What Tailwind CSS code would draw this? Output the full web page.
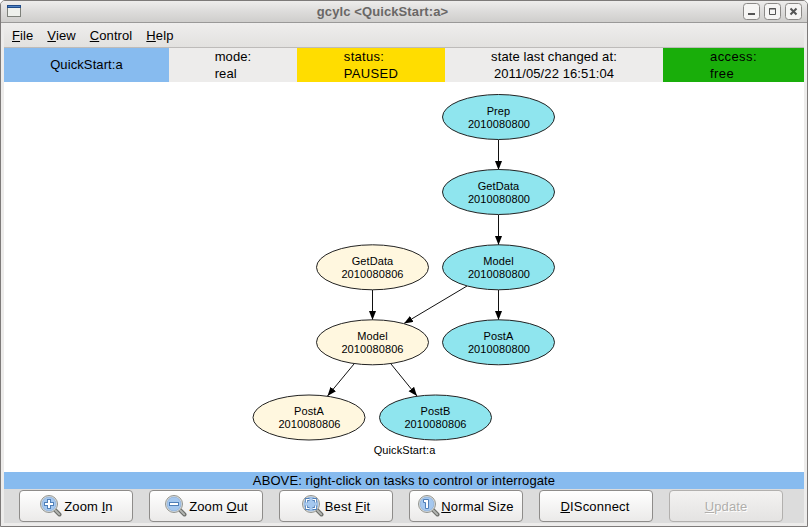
<!DOCTYPE html>
<html lang="en">
<head>
<meta charset="utf-8">
<title>gcylc &lt;QuickStart:a&gt;</title>
<script src="https://cdn.jsdelivr.net/npm/@tailwindcss/browser@4"></script>
</head>
<body class="bg-white">
<svg class="hidden">
  <defs>
    <symbol id="glass" viewBox="0 0 24 24">
      <path d="M16 16L20.500 20.500" stroke="#6d6f6b" stroke-width="4" stroke-linecap="round"/>
      <path d="M15.500 15.500L20.300 20.300" stroke="#b4b6b2" stroke-width="1.800" stroke-linecap="round"/>
      <circle cx="10" cy="10" r="8.500" fill="#e4e6e3" stroke="#92948f" stroke-width="1"/>
      <circle cx="10" cy="10" r="7" fill="#a5c8ef" stroke="#86a9d4" stroke-width=".7"/>
    </symbol>
  </defs>
</svg>
<div class="flex h-[527px] w-[808px] flex-col overflow-hidden rounded-t-[5px] border border-[#7d7a79] bg-[#edeceb] font-['Liberation_Sans',Arial,sans-serif] text-[13px] leading-[17px] tracking-[0.1px] text-black">
  <header class="flex h-[22px] shrink-0 items-center border-b border-[#9a9998] bg-linear-to-b from-[#eeedec] via-[#dddcdb] to-[#cfcecc] pl-[6px] pr-[5px]">
    <svg class="mb-px h-3 w-[14px] shrink-0" viewBox="0 0 14 12"><rect x=".5" y=".5" width="13" height="11" fill="#eef0ec" stroke="#7d807a"/><path d="M0 0h14v3H0z" fill="#204a87"/><path d="M1 1h12v1H1z" fill="#4f82c4"/></svg>
    <h1 class="flex-1 pl-px text-center text-[13px] font-bold text-[#696766]">gcylc &lt;QuickStart:a&gt;</h1>
    <div class="flex gap-1">
      <svg class="size-[17px]" viewBox="0 0 17 17"><rect x=".5" y=".5" width="16" height="16" rx="3" fill="#f6f5f4" stroke="#8b8987"/><path d="M5 10h7v2H5z" fill="#555"/></svg>
      <svg class="size-[17px]" viewBox="0 0 17 17"><rect x=".5" y=".5" width="16" height="16" rx="3" fill="#f6f5f4" stroke="#8b8987"/><path d="M5.500 5.500h6v6h-6zM5 6h7" fill="none" stroke="#555"/></svg>
      <svg class="size-[17px]" viewBox="0 0 17 17"><rect x=".5" y=".5" width="16" height="16" rx="3" fill="#f6f5f4" stroke="#8b8987"/><path d="M5.500 5.500l6 6m0-6l-6 6" stroke="#555" stroke-width="2"/></svg>
    </div>
  </header>
  <nav class="mx-[3px] flex h-[25px] shrink-0 items-center gap-[14px] border-b border-[#bdbbb9] bg-linear-to-b from-[#efeeed] to-[#e2e1df] pl-2">
    <span><u>F</u>ile</span><span><u>V</u>iew</span><span><u>C</u>ontrol</span><span><u>H</u>elp</span>
  </nav>
  <main class="mx-[3px] flex min-h-0 flex-1 flex-col">
    <section class="flex h-[34px] shrink-0 items-center">
      <div class="flex h-full w-[165px] items-center justify-center bg-[#87bbef] pb-[2px]">QuickStart:a</div>
      <div class="flex h-full w-[128px] justify-center"><p>mode:<br>real</p></div>
      <div class="flex h-full w-[148px] justify-center bg-[#ffdd00]"><p class="tracking-[0.3px]">status:<br>PAUSED</p></div>
      <div class="h-full w-[218px] text-center">state last changed at:<br>2011/05/22 16:51:04</div>
      <div class="flex h-full flex-1 justify-center bg-[#19ae0a]"><p class="tracking-[0.4px]">access:<br>free</p></div>
    </section>
    <svg class="h-[390px] w-[800px] shrink-0 bg-white" viewBox="4 82 800 390" font-family="Liberation Sans, Arial, sans-serif" font-size="11" text-anchor="middle">
      <defs><marker id="arrow" markerUnits="userSpaceOnUse" markerWidth="10" markerHeight="8" refX="9" refY="3.500" orient="auto"><path d="M0 0L9 3.500L0 7z"/></marker></defs>
      <g stroke="#111" stroke-width="1">
        <path d="M498.500 140V170" marker-end="url(#arrow)"/><path d="M498.500 215V245" marker-end="url(#arrow)"/><path d="M498.500 290V320" marker-end="url(#arrow)"/><path d="M372.500 290V320" marker-end="url(#arrow)"/>
        <path d="M467 286L404 323.500" marker-end="url(#arrow)"/><path d="M354 364L327.500 396" marker-end="url(#arrow)"/><path d="M391 364L417 396" marker-end="url(#arrow)"/>
      </g>
      <g fill="#8fe5ee" stroke="#222" stroke-width="1">
        <ellipse cx="498.500" cy="117" rx="56" ry="22.500"/><ellipse cx="498.500" cy="192" rx="56" ry="22.500"/><ellipse cx="498.500" cy="267.300" rx="56" ry="22.500"/><ellipse cx="498.500" cy="342.300" rx="56" ry="22.500"/><ellipse cx="435.500" cy="417.500" rx="56" ry="22.500"/>
      </g>
      <g fill="#fff7df" stroke="#222" stroke-width="1"><ellipse cx="372.500" cy="267.300" rx="56" ry="22.500"/><ellipse cx="372.500" cy="342.300" rx="56" ry="22.500"/><ellipse cx="309" cy="417.500" rx="56" ry="22.500"/></g>
      <text x="498.500" y="115">Prep</text><text x="499" y="128">2010080800</text>
      <text x="498.500" y="190">GetData</text><text x="499" y="203">2010080800</text>
      <text x="498.500" y="265">Model</text><text x="499" y="278">2010080800</text>
      <text x="498.500" y="340">PostA</text><text x="499" y="353">2010080800</text>
      <text x="372.500" y="265">GetData</text><text x="372.500" y="278">2010080806</text>
      <text x="372.500" y="340">Model</text><text x="372.500" y="353">2010080806</text>
      <text x="309" y="415">PostA</text><text x="309.500" y="428">2010080806</text>
      <text x="435.500" y="415">PostB</text><text x="435.500" y="428">2010080806</text>
      <text x="404.500" y="454">QuickStart:a</text>
    </svg>
    <p class="h-[17px] shrink-0 bg-[#87bbef] text-center">ABOVE: right-click on tasks to control or interrogate</p>
    <footer class="flex h-[34px] shrink-0 items-center gap-4 bg-[#dcdcdc] pl-[15px]">
      <button class="flex h-8 w-[114px] items-center justify-center gap-px rounded-[4px] border border-[#8e8c8a] bg-linear-to-b from-white to-[#ebeae9] tracking-[0.1px]"><svg class="size-6" viewBox="0 0 24 24" fill="none"><use href="#glass"/><path d="M10 5v10M5 10h10" stroke="#4f7fb8" stroke-width="4"/><path d="M10 6v8M6 10h8" stroke="#fff" stroke-width="2"/></svg><span>Zoom <u>I</u>n</span></button>
      <button class="flex h-8 w-[114px] items-center justify-center gap-px rounded-[4px] border border-[#8e8c8a] bg-linear-to-b from-white to-[#ebeae9] tracking-[0.1px]"><svg class="size-6" viewBox="0 0 24 24" fill="none"><use href="#glass"/><path d="M5 10h10" stroke="#4f7fb8" stroke-width="4"/><path d="M6 10h8" stroke="#fff" stroke-width="2"/></svg><span>Zoom <u>O</u>ut</span></button>
      <button class="flex h-8 w-[114px] items-center justify-center gap-0 rounded-[4px] border border-[#8e8c8a] bg-linear-to-b from-white to-[#ebeae9] pr-px tracking-[0.2px]"><svg class="size-6" viewBox="0 0 24 24" fill="none"><use href="#glass"/><path d="M5.500 8.500v-3h3M11.500 5.500h3v3M14.500 11.500v3h-3M8.500 14.500h-3v-3" stroke="#4f7fb8" stroke-width="2.800"/><path d="M5.500 8.500v-3h3M11.500 5.500h3v3M14.500 11.500v3h-3M8.500 14.500h-3v-3" stroke="#fff" stroke-width="1.200"/></svg><span>Best <u>F</u>it</span></button>
      <button class="flex h-8 w-[114px] items-center justify-center gap-0 rounded-[4px] border border-[#8e8c8a] bg-linear-to-b from-white to-[#ebeae9] pr-px tracking-[0.15px]"><svg class="size-6" viewBox="0 0 24 24" fill="none"><use href="#glass"/><path d="M6.500 5.500h5v9h-3v-6h-2z" fill="#fff" stroke="#4f7fb8"/></svg><span><u>N</u>ormal Size</span></button>
      <button class="flex h-8 w-[114px] items-center justify-center rounded-[4px] border border-[#8e8c8a] bg-linear-to-b from-white to-[#ebeae9] pr-[2px] tracking-[0.2px]"><span><u>D</u>ISconnect</span></button>
      <button class="flex h-8 w-[114px] items-center justify-center rounded-[4px] border border-[#b2b0ae] bg-linear-to-b from-[#f3f2f1] to-[#e4e3e2] text-[#b0aeab] [text-shadow:1px_1px_0_#fff]" disabled><span><u>U</u>pdate</span></button>
    </footer>
  </main>
</div>
</body>
</html>
